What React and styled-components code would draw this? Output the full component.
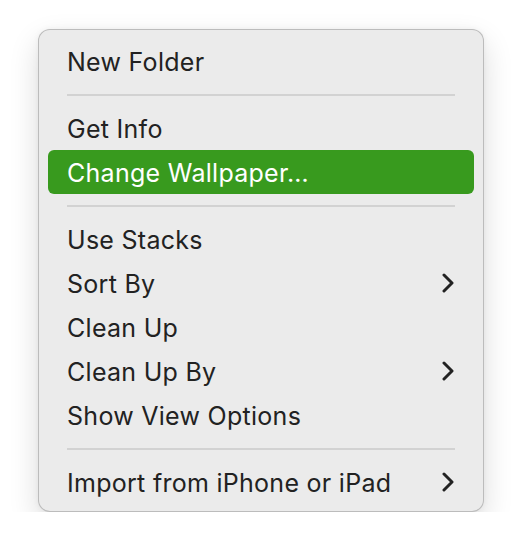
import React from 'react';
import styled, { createGlobalStyle } from 'styled-components';

const Global = createGlobalStyle`
  html, body { margin: 0; padding: 0; background: #fff; }
  body { font-family: Inter, "Noto Sans", "Liberation Sans", sans-serif; }
`;

const Menu = styled.div`
  box-sizing: border-box;
  width: 446px;
  margin: 29px 0 0 38px;
  padding: 9px 9px 7px;
  background: #ebebeb;
  border: 1px solid rgba(0, 0, 0, 0.2);
  border-radius: 12px;
  box-shadow: 0 12px 30px rgba(0, 0, 0, 0.14), 0 0 6px rgba(0, 0, 0, 0.05);
`;

const Item = styled.div`
  box-sizing: border-box;
  display: flex;
  align-items: center;
  justify-content: space-between;
  height: 44px;
  padding: 2px 20px 0 19px;
  border-radius: 6px;
  font-size: 25px;
  letter-spacing: 0.28px;
  color: ${p => (p.$active ? '#fff' : '#222')};
  background: ${p => (p.$active ? '#389a1e' : 'transparent')};

  svg { margin-top: -2px; }
`;

const Separator = styled.div`
  height: 2px;
  margin: 11px 19px 10px 19px;
  background: #d2d2d2;
`;

const Chevron = () => (
  <svg width="12" height="20" viewBox="0 0 12 20">
    <polyline points="2,2 10,10 2,18" fill="none" stroke="#222" strokeWidth="3" strokeLinecap="round" strokeLinejoin="round" />
  </svg>
);

const items = [
  { label: 'New Folder' },
  'sep',
  { label: 'Get Info' },
  { label: 'Change Wallpaper…', active: true },
  'sep',
  { label: 'Use Stacks' },
  { label: 'Sort By', sub: true },
  { label: 'Clean Up' },
  { label: 'Clean Up By', sub: true },
  { label: 'Show View Options' },
  'sep',
  { label: 'Import from iPhone or iPad', sub: true },
];

export default function App() {
  return (
    <>
      <Global />
      <Menu>
        {items.map((it, i) =>
          it === 'sep' ? (
            <Separator key={i} />
          ) : (
            <Item key={i} $active={it.active}>
              <span>{it.label}</span>
              {it.sub && <Chevron />}
            </Item>
          )
        )}
      </Menu>
    </>
  );
}
